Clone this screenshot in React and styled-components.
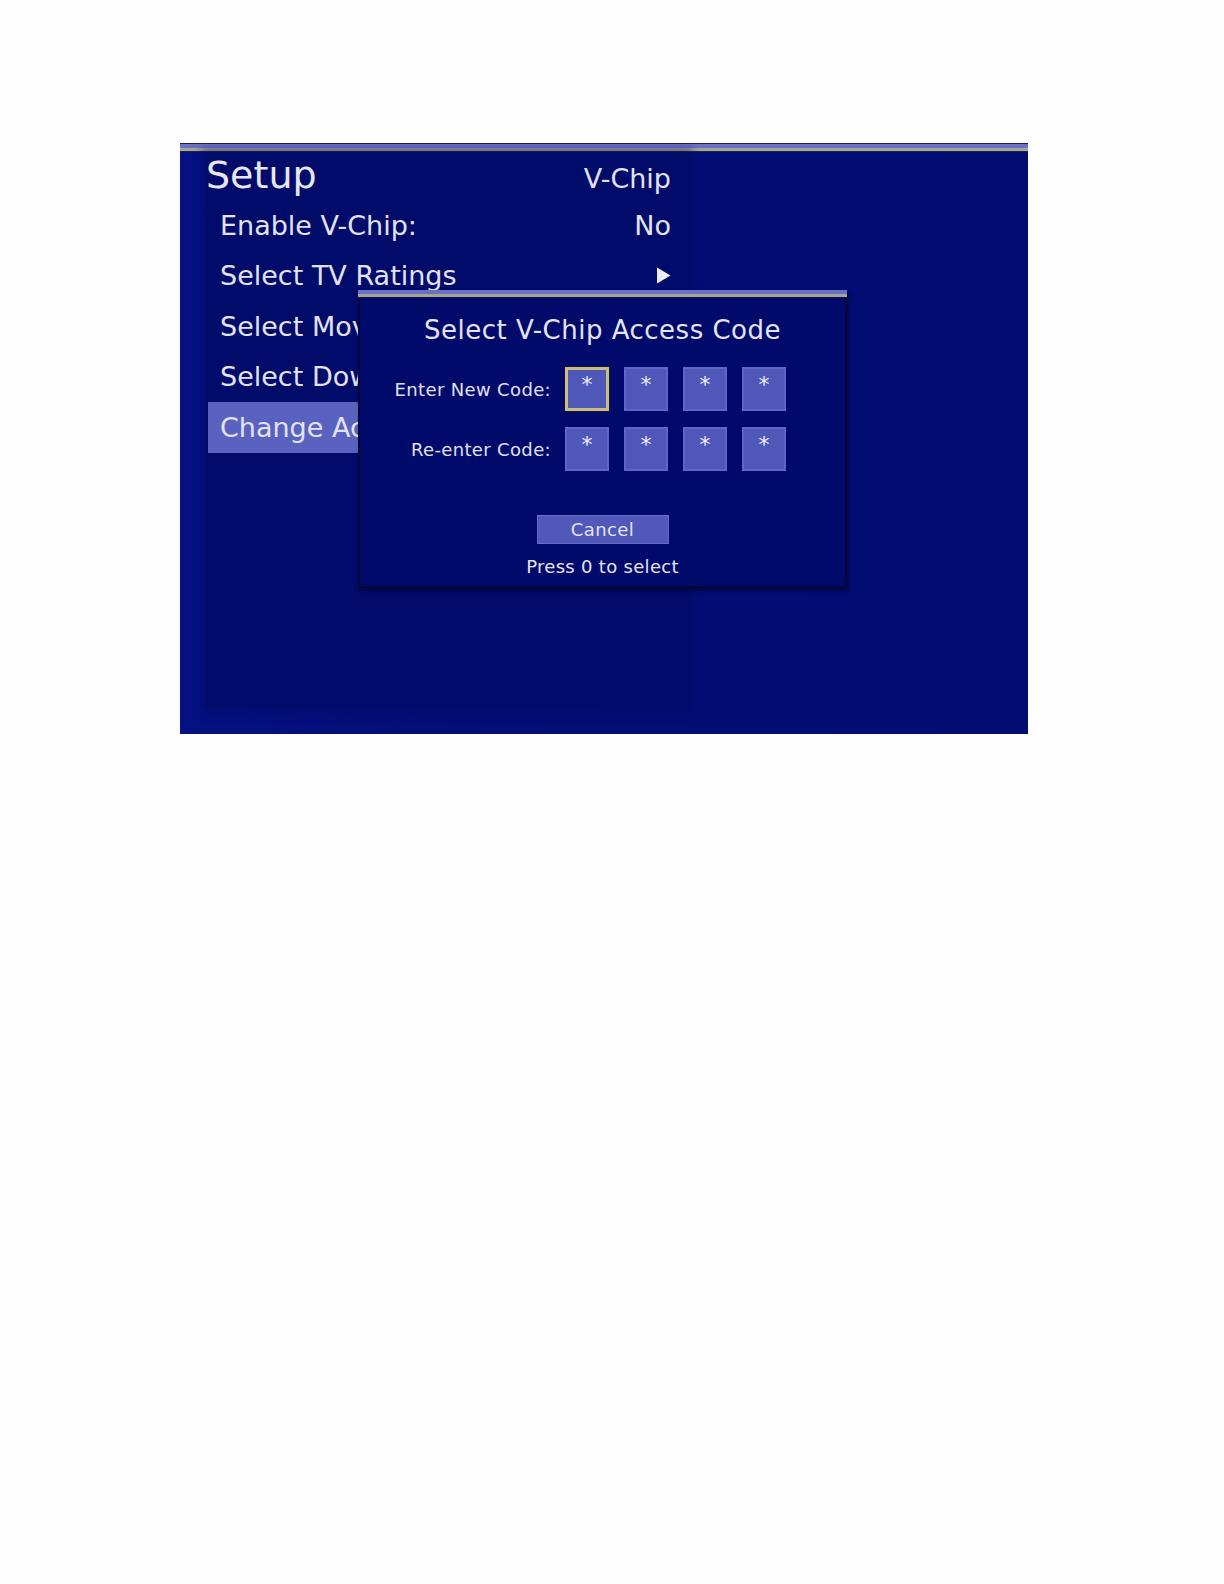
import React from "react";
import styled, { createGlobalStyle } from "styled-components";

const GlobalStyle = createGlobalStyle`
  html, body {
    margin: 0;
    padding: 0;
    background: #fefefe;
    overflow: hidden;
  }
  body {
    font-family: "DejaVu Sans", "Liberation Sans", sans-serif;
  }
`;

const menu = [
  { label: "Enable V-Chip:", value: "No" },
  { label: "Select TV Ratings", arrow: true },
  { label: "Select Movie Ratings" },
  { label: "Select Downloadable Ratings" },
  { label: "Change Access Code", active: true },
];

const codeRows = [
  { label: "Enter New Code:", focus: 0 },
  { label: "Re-enter Code:", focus: -1 },
];

export default function App() {
  return (
    <Page>
      <GlobalStyle />
      <Screen>
        <TopRule />
        <Body>
          <Panel>
            <Header>
              <Title>Setup</Title>
              <Section>V-Chip</Section>
            </Header>
            {menu.map((item, i) => (
              <Row key={i} active={item.active}>
                <RowLabel>{item.label}</RowLabel>
                {item.value && <RowValue>{item.value}</RowValue>}
                {item.arrow && (
                  <svg width="15" height="17" viewBox="0 0 15 17">
                    <path d="M1 0.5 L14.5 8.5 L1 16.5 Z" fill="#ececfa" />
                  </svg>
                )}
              </Row>
            ))}
          </Panel>
        </Body>

        <Dialog>
          <DialogRule />
          <DialogTitle>Select V-Chip Access Code</DialogTitle>
          <CodeGrid>
            {codeRows.map((r, i) => (
              <React.Fragment key={i}>
                <CodeLabel>{r.label}</CodeLabel>
                <Boxes>
                  {[0, 1, 2, 3].map((n) => (
                    <CodeBox key={n} focus={n === r.focus}>
                      *
                    </CodeBox>
                  ))}
                </Boxes>
              </React.Fragment>
            ))}
          </CodeGrid>
          <CancelButton>Cancel</CancelButton>
          <Hint>Press 0 to select</Hint>
        </Dialog>
      </Screen>
    </Page>
  );
}

const Page = styled.div`
  padding: 143px 0 0 180px;
`;

const Screen = styled.div`
  position: relative;
  width: 848px;
  height: 591px;
  background: linear-gradient(90deg, #051180 0%, #030e76 30%, #020d72 100%);
  overflow: hidden;
`;

const TopRule = styled.div`
  height: 9px;
  background: linear-gradient(
    180deg,
    #1a1f50 0px,
    #1a1f50 1px,
    #6a70c4 1px,
    #6a70c4 5px,
    #a6a690 5px,
    #a6a690 8px,
    #1c2060 8px
  );
`;

const Body = styled.div`
  display: flex;
  padding-left: 25px;
`;

const Panel = styled.div`
  width: 485px;
  height: 556px;
  background: #010b6a;
  box-shadow: 0 0 8px 3px rgba(1, 10, 100, 0.5);
  display: flex;
  flex-direction: column;
  color: #e2e2f2;
`;

const Header = styled.div`
  height: 48px;
  display: flex;
  align-items: baseline;
  justify-content: space-between;
  padding: 0 19px 0 1px;
`;

const Title = styled.span`
  font-size: 38px;
  line-height: 46px;
  color: #e6e6f4;
`;

const Section = styled.span`
  font-size: 27px;
  color: #e2e2f2;
`;

const Row = styled.div`
  height: 50.5px;
  margin-left: 3px;
  padding: 0 19px 0 12px;
  display: flex;
  align-items: center;
  justify-content: space-between;
  background: ${(p) => (p.active ? "#5a62c0" : "transparent")};
`;

const RowLabel = styled.span`
  font-size: 27px;
  white-space: nowrap;
  overflow: hidden;
`;

const RowValue = styled.span`
  font-size: 27px;
`;

const Dialog = styled.div`
  position: absolute;
  left: 178px;
  top: 147px;
  width: 489px;
  height: 298px;
  box-sizing: border-box;
  background: #000a6a;
  border: 2px solid #000638;
  border-top: none;
  box-shadow: 2px 3px 4px rgba(0, 0, 40, 0.6);
  display: flex;
  flex-direction: column;
  align-items: center;
  color: #e2e2f2;
`;

const DialogRule = styled.div`
  align-self: stretch;
  margin: 0 -2px;
  height: 8px;
  background: linear-gradient(
    180deg,
    #6a70c4 0px,
    #6a70c4 4px,
    #a6a690 4px,
    #a6a690 7px,
    #0a1260 7px
  );
`;

const DialogTitle = styled.div`
  margin-top: 12px;
  font-size: 26px;
  letter-spacing: 0.5px;
  line-height: 40px;
  color: #e4e4f4;
`;

const CodeGrid = styled.div`
  align-self: flex-start;
  margin-top: 17px;
  display: grid;
  grid-template-columns: 191px auto;
  column-gap: 14px;
  row-gap: 16px;
  align-items: center;
`;

const CodeLabel = styled.span`
  justify-self: end;
  font-size: 18px;
  letter-spacing: 0.35px;
  color: #e0e0f0;
`;

const Boxes = styled.div`
  display: flex;
  gap: 15px;
`;

const CodeBox = styled.div`
  width: 44px;
  height: 44px;
  box-sizing: border-box;
  background: #4f57b8;
  border: ${(p) => (p.focus ? "3px solid #c9bd82" : "2px solid #5d66c2")};
  outline: ${(p) => (p.focus ? "1px solid #10143a" : "none")};
  display: flex;
  justify-content: center;
  padding-top: ${(p) => (p.focus ? "4px" : "5px")};
  font-size: 22px;
  line-height: 22px;
  color: #eeeeff;
`;

const CancelButton = styled.div`
  margin-top: 44px;
  width: 132px;
  height: 29px;
  box-sizing: border-box;
  background: #5058b9;
  border: 1px solid #646cc6;
  display: flex;
  align-items: center;
  justify-content: center;
  font-size: 18px;
  letter-spacing: 0.4px;
  color: #e4e4f4;
`;

const Hint = styled.div`
  margin-top: 12px;
  font-size: 18px;
  letter-spacing: 0.3px;
  color: #e4e4f4;
`;
